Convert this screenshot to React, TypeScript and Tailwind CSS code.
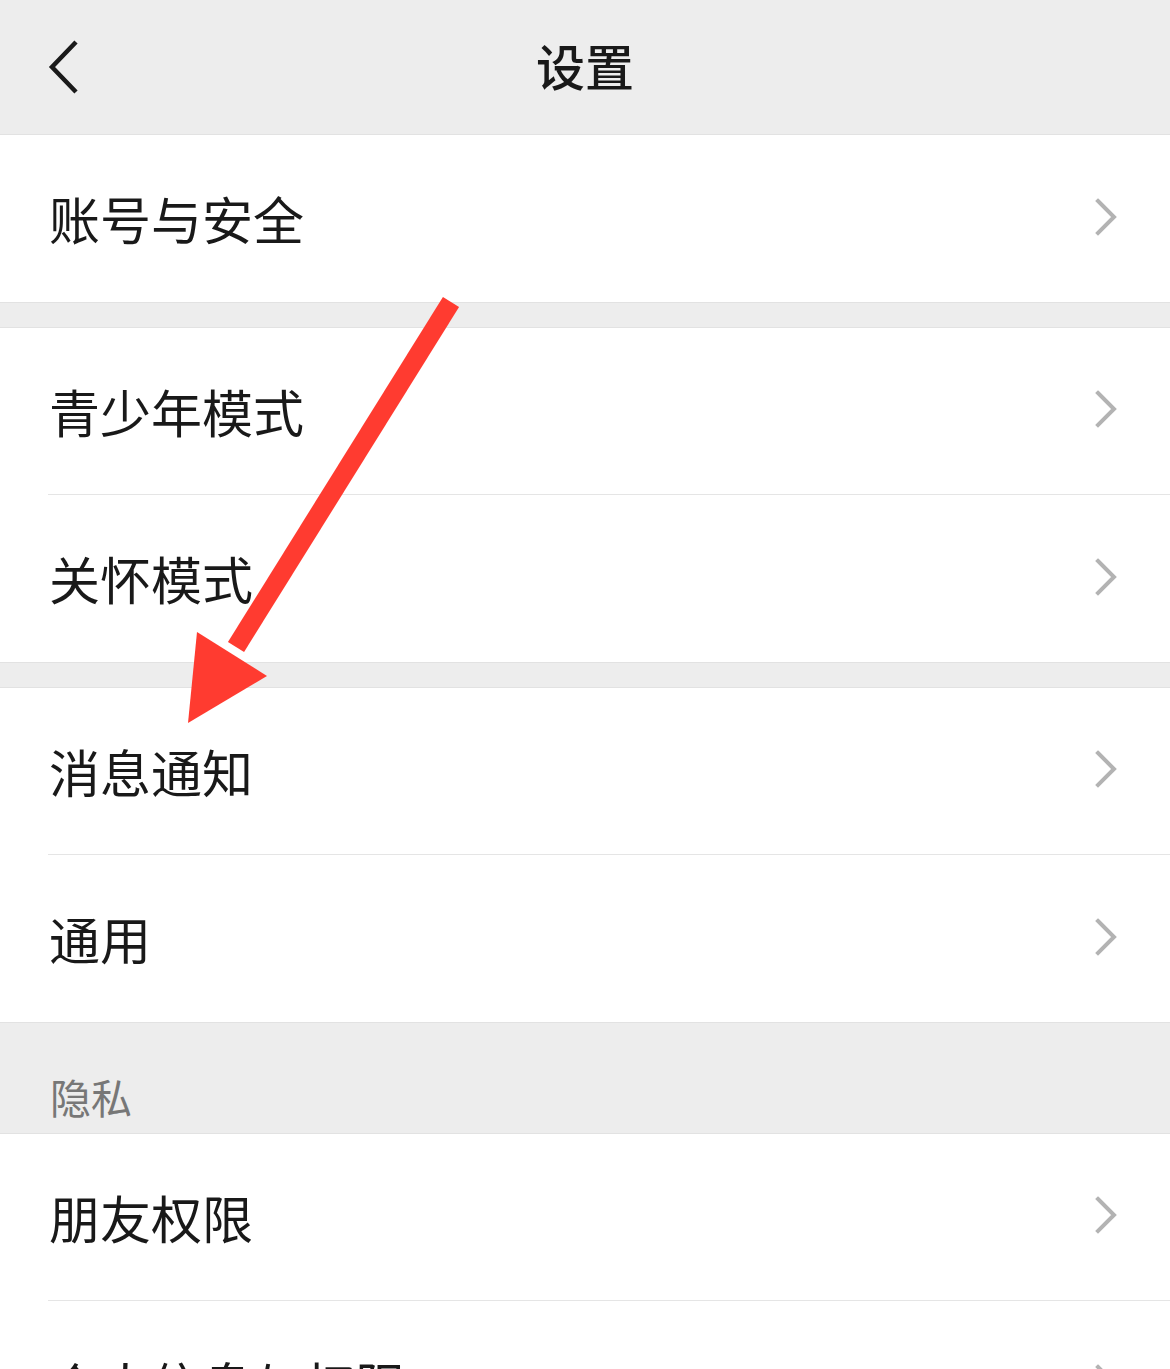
import { Fragment } from "react";

type Item = { label: string; divider?: boolean };

const groups: { title?: string; items: Item[] }[] = [
  { items: [{ label: "账号与安全" }] },
  { items: [{ label: "青少年模式", divider: true }, { label: "关怀模式" }] },
  { items: [{ label: "消息通知", divider: true }, { label: "通用" }] },
  { title: "隐私", items: [{ label: "朋友权限", divider: true }, { label: "个人信息与权限" }] },
];

const font = { fontFamily: '"Noto Sans CJK SC", "Noto Sans", sans-serif' };

function Chevron() {
  return (
    <svg width="28" height="42" viewBox="0 0 28 42" className="mr-[48px] shrink-0">
      <path d="M4 3 L20 19 L4 35" fill="none" stroke="#b3b3b3" strokeWidth="4" strokeLinecap="square" />
    </svg>
  );
}

function Row({ label, divider }: Item) {
  return (
    <>
      <div className={`flex items-center justify-between bg-white pl-[49px] ${divider ? "h-[166px]" : "h-[167px]"}`}>
        <span className="text-[51px] leading-none text-[#191919]">{label}</span>
        <Chevron />
      </div>
      {divider && (
        <div className="bg-white pl-[48px]">
          <div className="h-px bg-[#e5e5e5]" />
        </div>
      )}
    </>
  );
}

export default function App() {
  return (
    <div className="relative h-[1369px] w-[1170px] overflow-hidden bg-[#ededed]" style={font}>
      <header className="relative flex h-[135px] items-center justify-center border-b border-[#e2e2e2] bg-[#ededed] pb-[6px]">
        <svg width="40" height="56" viewBox="0 0 40 56" className="absolute left-[44px] top-[39px]">
          <path d="M32 3 L8 28 L32 53" fill="none" stroke="#1a1a1a" strokeWidth="4.5" />
        </svg>
        <h1 className="text-[49px] font-medium leading-none text-[#191919]">设置</h1>
      </header>

      {groups.map((g, i) => (
        <Fragment key={i}>
          {i > 0 &&
            (g.title ? (
              <div className="flex h-[112px] items-end border-y border-[#e2e2e2] pb-[16px] pl-[50px]">
                <span className="text-[41px] leading-none text-[#777777]">{g.title}</span>
              </div>
            ) : (
              <div className="h-[26px] border-y border-[#e2e2e2]" />
            ))}
          {g.items.map((it) => (
            <Row key={it.label} {...it} />
          ))}
        </Fragment>
      ))}

      <svg className="pointer-events-none absolute left-0 top-0" width="1170" height="1369" viewBox="0 0 1170 1369">
        <line x1="451" y1="302" x2="236" y2="647" stroke="#ff3b30" strokeWidth="19" />
        <polygon points="197,632 267,676 188,723" fill="#ff3b30" />
      </svg>
    </div>
  );
}
